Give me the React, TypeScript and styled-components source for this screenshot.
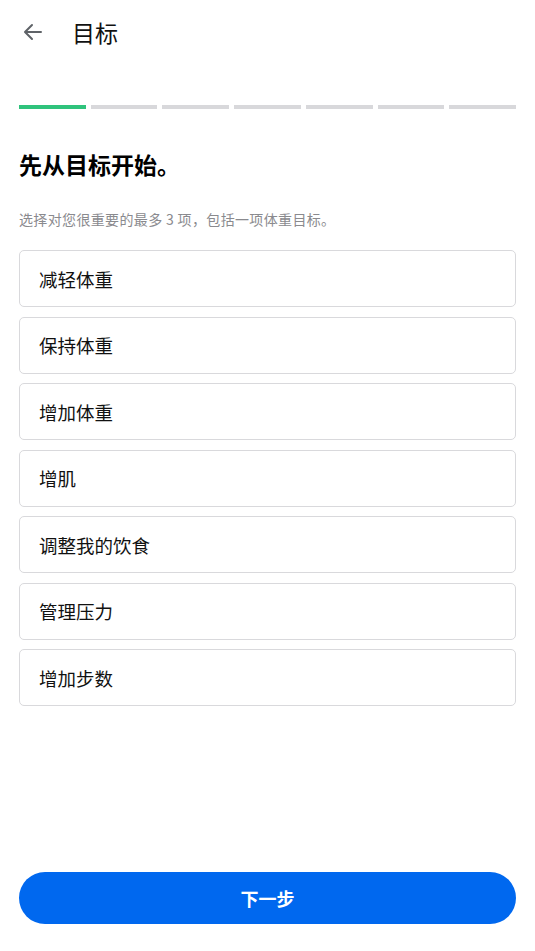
import React, { useState } from "react";
import styled, { createGlobalStyle } from "styled-components";

const goals = [
  "减轻体重",
  "保持体重",
  "增加体重",
  "增肌",
  "调整我的饮食",
  "管理压力",
  "增加步数",
];

const STEPS = 7;

const App: React.FC = () => {
  const [picked, setPicked] = useState<string[]>([]);

  function toggle(goal: string) {
    setPicked((prev) =>
      prev.includes(goal)
        ? prev.filter((g) => g !== goal)
        : prev.length < 3
        ? [...prev, goal]
        : prev
    );
  }

  return (
    <Page>
      <GlobalStyle />
      <Header>
        <BackButton aria-label="返回">
          <svg width="24" height="24" viewBox="0 0 24 24" fill="none">
            <path
              d="M20 12H4.5M11 5l-7 7 7 7"
              stroke="#5f6368"
              strokeWidth="2"
              strokeLinecap="round"
              strokeLinejoin="round"
            />
          </svg>
        </BackButton>
        <Title>目标</Title>
      </Header>

      <Progress>
        {Array.from({ length: STEPS }).map((_, i) => (
          <Segment key={i} $done={i === 0} />
        ))}
      </Progress>

      <Heading>先从目标开始。</Heading>
      <Hint>选择对您很重要的最多 3 项，包括一项体重目标。</Hint>

      <GoalList>
        {goals.map((goal) => (
          <GoalCard
            key={goal}
            $active={picked.includes(goal)}
            onClick={() => toggle(goal)}
          >
            {goal}
          </GoalCard>
        ))}
      </GoalList>

      <Footer>
        <NextButton>下一步</NextButton>
      </Footer>
    </Page>
  );
};

export default App;

const GlobalStyle = createGlobalStyle`
  body {
    margin: 0;
    background: #ffffff;
    font-family: "Noto Sans CJK SC", "Noto Sans", sans-serif;
  }
`;

const Page = styled.div`
  display: flex;
  flex-direction: column;
  height: 951px;
  padding: 0 19px;
  box-sizing: border-box;
  color: #111111;
`;

const Header = styled.div`
  display: flex;
  align-items: center;
  height: 64px;
  gap: 27px;
`;

const BackButton = styled.button`
  display: flex;
  align-items: center;
  justify-content: center;
  padding: 0;
  margin-left: 2px;
  border: none;
  background: none;
  width: 24px;
  height: 24px;
`;

const Title = styled.h1`
  margin: 0;
  font-size: 23px;
  line-height: 32px;
  font-weight: 400;
  color: #111111;
`;

const Progress = styled.div`
  display: flex;
  gap: 5px;
  margin-top: 41px;
`;

const Segment = styled.div<{ $done: boolean }>`
  flex: 1;
  height: 4px;
  background: ${(p) => (p.$done ? "#2fc37c" : "#d8d8db")};
`;

const Heading = styled.h2`
  margin: 39px 0 0;
  font-size: 23px;
  line-height: 32px;
  font-weight: 700;
  color: #000000;
`;

const Hint = styled.p`
  margin: 29px 0 0;
  font-size: 14px;
  line-height: 20px;
  letter-spacing: 0.35px;
  color: #8a8a8e;
`;

const GoalList = styled.div`
  display: flex;
  flex-direction: column;
  gap: 9.5px;
  margin-top: 21px;
`;

const GoalCard = styled.div<{ $active: boolean }>`
  display: flex;
  align-items: center;
  height: 57px;
  box-sizing: border-box;
  padding-left: 19px;
  border: 1px solid ${(p) => (p.$active ? "#0068ef" : "#d9d9dc")};
  border-radius: 5px;
  font-size: 18.5px;
  color: #111111;
  cursor: pointer;
`;

const Footer = styled.div`
  margin-top: auto;
  padding-bottom: 27px;
`;

const NextButton = styled.button`
  display: block;
  width: 100%;
  height: 52px;
  border: none;
  border-radius: 26px;
  background: #0068ef;
  color: #ffffff;
  font-family: "Noto Sans CJK SC", "Noto Sans", sans-serif;
  font-size: 18px;
  font-weight: 700;
`;
